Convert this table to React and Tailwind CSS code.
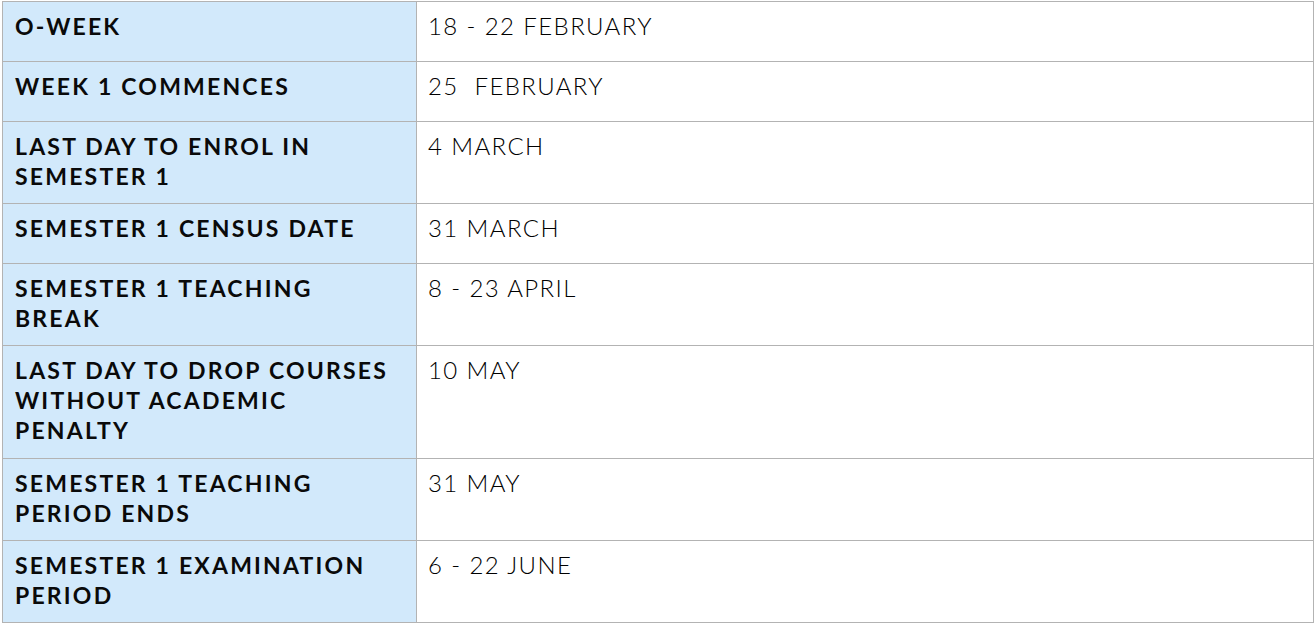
import React from "react";

const rows = [
  [["O-WEEK"], "18 - 22 FEBRUARY"],
  [["WEEK 1 COMMENCES"], "25\u00a0 FEBRUARY"],
  [["LAST DAY TO ENROL IN", "SEMESTER 1"], "4 MARCH"],
  [["SEMESTER 1 CENSUS DATE"], "31 MARCH"],
  [["SEMESTER 1 TEACHING", "BREAK"], "8 - 23 APRIL"],
  [["LAST DAY TO DROP COURSES", "WITHOUT ACADEMIC", "PENALTY"], "10 MAY"],
  [["SEMESTER 1 TEACHING", "PERIOD ENDS"], "31 MAY"],
  [["SEMESTER 1 EXAMINATION", "PERIOD"], "6 - 22 JUNE"],
];

export default function App() {
  return (
    <div className="w-[1316px] h-[626px] bg-white pt-px pl-[2px]" style={{ fontFamily: "Lato, 'Open Sans', sans-serif" }}>
      <table className="border-collapse w-[1312px] text-[#0a0a0a]">
        <tbody>
          {rows.map(([lines, b], i) => (
            <tr key={i} className={lines.length === 3 ? "align-top h-[113px]" : "align-top"}>
              <td className="w-[414px] h-[60px] bg-[#d2e9fb] border border-[#b3b3b3] pl-[12px] pr-[4px] pt-[9px] pb-[12px] text-[23px] leading-[30px] font-bold tracking-[2.2px] whitespace-nowrap">
                {lines.map((l, j) => (
                  <div key={j}>{l}</div>
                ))}
              </td>
              <td className="border border-[#b3b3b3] pl-[11px] pt-[9px] pb-[12px] text-[24px] leading-[30px] font-light tracking-[1.4px] text-black">
                {b}
              </td>
            </tr>
          ))}
        </tbody>
      </table>
    </div>
  );
}
